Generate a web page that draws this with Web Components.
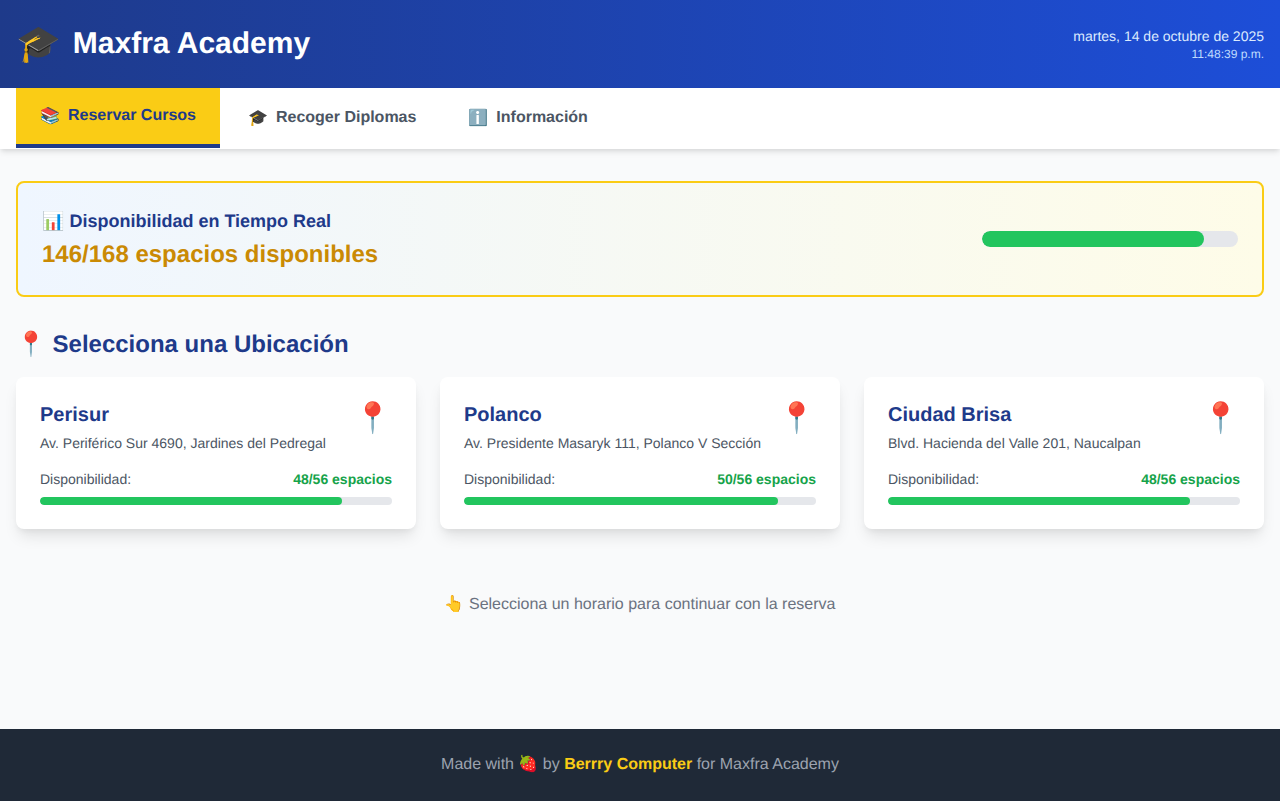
<!DOCTYPE html>
<html lang="es">
<head>
<meta charset="utf-8">
<title>Maxfra Academy</title>
<style>
    html, body {
        margin: 0;
        padding: 0;
    }

    body {
        min-height: 801px;
        display: flex;
        flex-direction: column;
        background-color: #f9fafb;
        color: #111827;
        font-family: "Liberation Sans", Arial, sans-serif;
        text-rendering: geometricPrecision;
    }

    app-main {
        flex: 1;
    }
</style>
</head>
<body>
<app-header title="Maxfra Academy" date="martes, 14 de octubre de 2025" time="11:48:39 p.m."></app-header>
<nav-tabs>
    <nav-tab icon="📚" active>Reservar Cursos</nav-tab>
    <nav-tab icon="🎓">Recoger Diplomas</nav-tab>
    <nav-tab icon="ℹ️">Información</nav-tab>
</nav-tabs>
<app-main>
    <availability-banner free="146" total="168"></availability-banner>
    <section-title>📍 Selecciona una Ubicación</section-title>
    <location-grid>
        <location-card name="Perisur" address="Av. Periférico Sur 4690, Jardines del Pedregal" free="48" total="56"></location-card>
        <location-card name="Polanco" address="Av. Presidente Masaryk 111, Polanco V Sección" free="50" total="56"></location-card>
        <location-card name="Ciudad Brisa" address="Blvd. Hacienda del Valle 201, Naucalpan" free="48" total="56"></location-card>
    </location-grid>
    <hint-text>👆 Selecciona un horario para continuar con la reserva</hint-text>
</app-main>
<app-footer></app-footer>

<script>
class AppHeader extends HTMLElement {
    constructor() {
        super();
        this.attachShadow({ mode: "open" });
        this.shadowRoot.innerHTML = `
            <style>
                :host {
                    display: flex;
                    align-items: center;
                    justify-content: space-between;
                    height: 88px;
                    padding: 0 16px;
                    box-sizing: border-box;
                    background: linear-gradient(to right, #1e3a8a, #1d4ed8);
                    color: white;
                }

                .brand {
                    display: flex;
                    align-items: center;
                    gap: 12px;
                }

                .logo {
                    font-size: 36px;
                    line-height: 40px;
                }

                h1 {
                    margin: 0;
                    font-size: 30px;
                    line-height: 36px;
                    font-weight: 700;
                }

                .clock {
                    text-align: right;
                }

                .date {
                    font-size: 14px;
                    line-height: 20px;
                    color: #dbeafe;
                }

                .time {
                    font-size: 12px;
                    line-height: 16px;
                    color: #bfdbfe;
                }
            </style>
            <div class="brand">
                <span class="logo">🎓</span>
                <h1>${this.getAttribute("title")}</h1>
            </div>
            <div class="clock">
                <div class="date">${this.getAttribute("date")}</div>
                <div class="time">${this.getAttribute("time")}</div>
            </div>
        `;
    }
}

class NavTabs extends HTMLElement {
    constructor() {
        super();
        this.attachShadow({ mode: "open" });
        this.shadowRoot.innerHTML = `
            <style>
                :host {
                    display: flex;
                    height: 60px;
                    padding: 0 16px 1px;
                    background-color: white;
                    box-shadow: 0 4px 6px -1px rgba(0, 0, 0, .1), 0 2px 4px -1px rgba(0, 0, 0, .06);
                    position: relative;
                }
            </style>
            <slot></slot>
        `;
    }
}

class NavTab extends HTMLElement {
    constructor() {
        super();
        this.attachShadow({ mode: "open" });
        this.shadowRoot.innerHTML = `
            <style>
                :host {
                    display: flex;
                    align-items: center;
                    gap: 8px;
                    padding: 0 24px;
                    margin-right: 4px;
                    box-sizing: border-box;
                    font-size: 16px;
                    font-weight: 700;
                    color: #4b5563;
                }

                :host([active]) {
                    background-color: #facc15;
                    border-bottom: 4px solid #1e3a8a;
                    color: #1e3a8a;
                    margin-right: 4px;
                }
            </style>
            <span>${this.getAttribute("icon")}</span>
            <span><slot></slot></span>
        `;
    }
}

class AppMain extends HTMLElement {
    constructor() {
        super();
        this.attachShadow({ mode: "open" });
        this.shadowRoot.innerHTML = `
            <style>
                :host {
                    display: block;
                    padding: 32px 16px;
                }
            </style>
            <slot></slot>
        `;
    }
}

class ProgressBar extends HTMLElement {
    constructor() {
        super();
        this.attachShadow({ mode: "open" });
        const percent = Number(this.getAttribute("value")) / Number(this.getAttribute("max")) * 100;
        this.shadowRoot.innerHTML = `
            <style>
                :host {
                    display: block;
                    height: 8px;
                    background-color: #e5e7eb;
                    border-radius: 9999px;
                    overflow: hidden;
                }

                .fill {
                    height: 100%;
                    background-color: #22c55e;
                    border-radius: 9999px;
                }
            </style>
            <div class="fill" style="width: ${percent}%"></div>
        `;
    }
}

class AvailabilityBanner extends HTMLElement {
    constructor() {
        super();
        this.attachShadow({ mode: "open" });
        const free = this.getAttribute("free");
        const total = this.getAttribute("total");
        this.shadowRoot.innerHTML = `
            <style>
                :host {
                    display: flex;
                    align-items: center;
                    justify-content: space-between;
                    padding: 24px;
                    margin-bottom: 32px;
                    background: linear-gradient(to right, #eff6ff, #fefce8);
                    border: 2px solid #facc15;
                    border-radius: 8px;
                }

                h3 {
                    margin: 0 0 4px;
                    font-size: 18px;
                    line-height: 28px;
                    font-weight: 700;
                    color: #1e3a8a;
                }

                p {
                    margin: 0;
                    font-size: 24px;
                    line-height: 32px;
                    font-weight: 700;
                    color: #ca8a04;
                }

                progress-bar {
                    width: 256px;
                    height: 16px;
                }
            </style>
            <div>
                <h3>📊 Disponibilidad en Tiempo Real</h3>
                <p>${free}/${total} espacios disponibles</p>
            </div>
            <progress-bar value="${free}" max="${total}"></progress-bar>
        `;
    }
}

class SectionTitle extends HTMLElement {
    constructor() {
        super();
        this.attachShadow({ mode: "open" });
        this.shadowRoot.innerHTML = `
            <style>
                :host {
                    display: block;
                    margin-bottom: 16px;
                    font-size: 24px;
                    line-height: 32px;
                    font-weight: 700;
                    color: #1e3a8a;
                }
            </style>
            <slot></slot>
        `;
    }
}

class LocationGrid extends HTMLElement {
    constructor() {
        super();
        this.attachShadow({ mode: "open" });
        this.shadowRoot.innerHTML = `
            <style>
                :host {
                    display: grid;
                    grid-template-columns: repeat(3, 1fr);
                    gap: 24px;
                }
            </style>
            <slot></slot>
        `;
    }
}

class LocationCard extends HTMLElement {
    constructor() {
        super();
        this.attachShadow({ mode: "open" });
        const free = this.getAttribute("free");
        const total = this.getAttribute("total");
        this.shadowRoot.innerHTML = `
            <style>
                :host {
                    display: block;
                    padding: 24px;
                    background-color: white;
                    border-radius: 8px;
                    box-shadow: 0 10px 15px -3px rgba(0, 0, 0, .1), 0 4px 6px -2px rgba(0, 0, 0, .05);
                }

                .top {
                    display: flex;
                    align-items: flex-start;
                    justify-content: space-between;
                    margin-bottom: 16px;
                }

                h3 {
                    margin: 0 0 4px;
                    font-size: 20px;
                    line-height: 28px;
                    font-weight: 700;
                    color: #1e3a8a;
                }

                .address {
                    margin: 0;
                    font-size: 14px;
                    line-height: 20px;
                    color: #4b5563;
                }

                .pin {
                    font-size: 30px;
                    line-height: 36px;
                }

                .row {
                    display: flex;
                    justify-content: space-between;
                    margin-bottom: 8px;
                    font-size: 14px;
                    line-height: 20px;
                    color: #4b5563;
                }

                .count {
                    font-weight: 700;
                    color: #16a34a;
                }
            </style>
            <div class="top">
                <div>
                    <h3>${this.getAttribute("name")}</h3>
                    <p class="address">${this.getAttribute("address")}</p>
                </div>
                <span class="pin">📍</span>
            </div>
            <div class="row">
                <span>Disponibilidad:</span>
                <span class="count">${free}/${total} espacios</span>
            </div>
            <progress-bar value="${free}" max="${total}"></progress-bar>
        `;
    }
}

class HintText extends HTMLElement {
    constructor() {
        super();
        this.attachShadow({ mode: "open" });
        this.shadowRoot.innerHTML = `
            <style>
                :host {
                    display: block;
                    margin-top: 64px;
                    text-align: center;
                    font-size: 16px;
                    line-height: 24px;
                    color: #6b7280;
                }
            </style>
            <slot></slot>
        `;
    }
}

class AppFooter extends HTMLElement {
    constructor() {
        super();
        this.attachShadow({ mode: "open" });
        this.shadowRoot.innerHTML = `
            <style>
                :host {
                    display: block;
                    padding: 24px 16px;
                    background-color: #1f2937;
                    text-align: center;
                    font-size: 16px;
                    line-height: 24px;
                    color: #9ca3af;
                }

                strong {
                    font-weight: 700;
                    color: #facc15;
                }
            </style>
            Made with 🍓 by <strong>Berrry Computer</strong> for Maxfra Academy
        `;
    }
}

customElements.define("app-header", AppHeader);
customElements.define("nav-tabs", NavTabs);
customElements.define("nav-tab", NavTab);
customElements.define("app-main", AppMain);
customElements.define("progress-bar", ProgressBar);
customElements.define("availability-banner", AvailabilityBanner);
customElements.define("section-title", SectionTitle);
customElements.define("location-grid", LocationGrid);
customElements.define("location-card", LocationCard);
customElements.define("hint-text", HintText);
customElements.define("app-footer", AppFooter);
</script>
</body>
</html>
